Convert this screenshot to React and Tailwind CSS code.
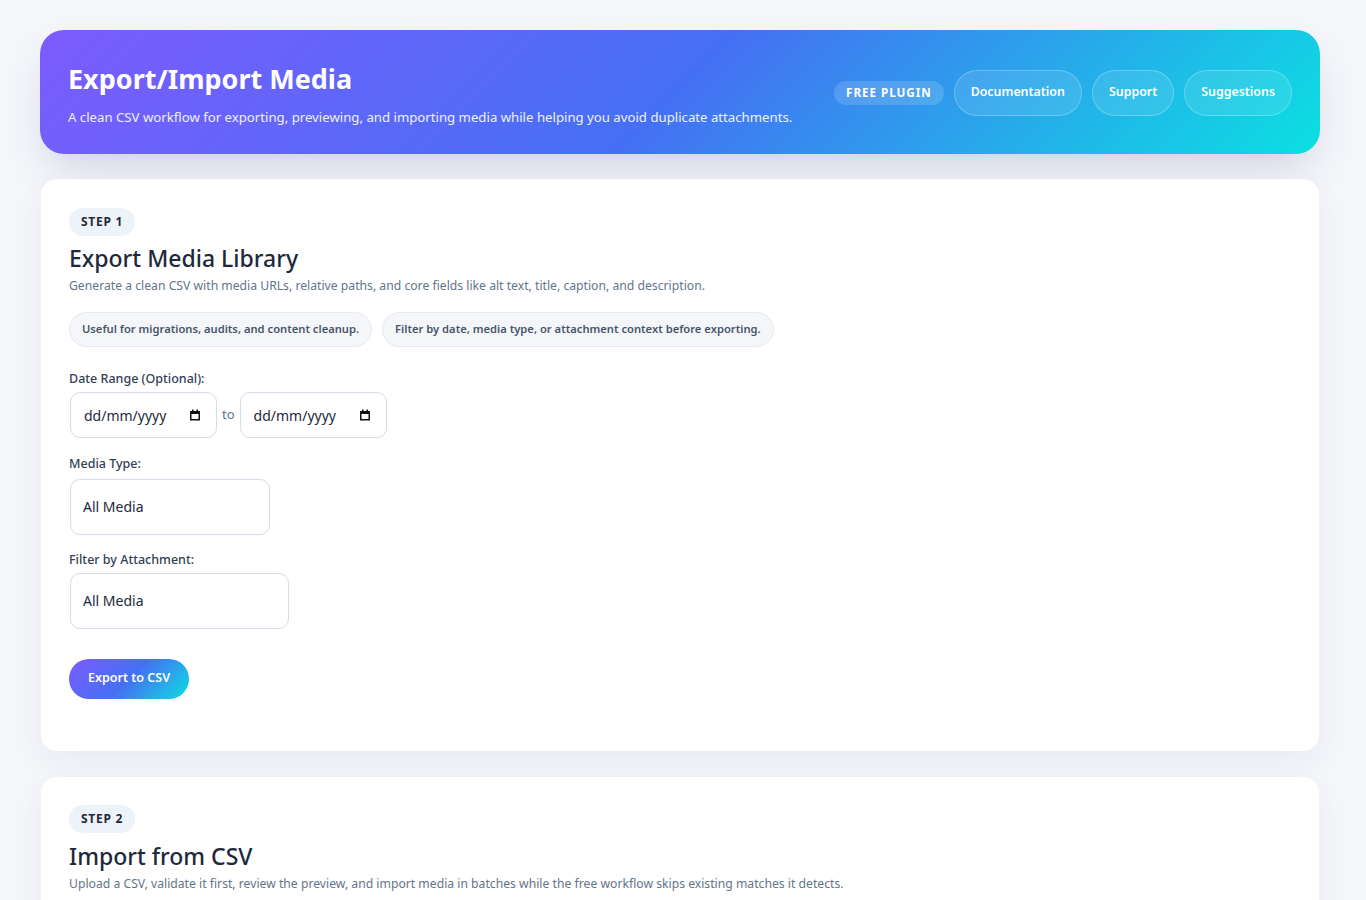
import React from 'react'

// Small calendar glyph like Chrome's date picker indicator
function CalendarIcon() {
  return (
    <svg width="12" height="12" viewBox="0 0 12 12" className="shrink-0">
      <rect x="3" y="0.5" width="1.5" height="2" fill="#111" />
      <rect x="7.5" y="0.5" width="1.5" height="2" fill="#111" />
      <rect x="1" y="2" width="10" height="3" fill="#111" />
      <rect x="1.75" y="2.75" width="8.5" height="8" fill="none" stroke="#111" strokeWidth="1.5" />
    </svg>
  )
}

function DateField() {
  return (
    <div className="flex items-center justify-between w-[147px] h-[46px] pl-[13px] pr-[15px] bg-white border border-[#d6dce8] rounded-[10px] text-[14px] text-[#1e293b]">
      <span>dd/mm/yyyy</span>
      <CalendarIcon />
    </div>
  )
}

function SelectField({ width }) {
  return (
    <select
      className={`appearance-none h-[56px] px-[12px] bg-white border border-[#d6dce8] rounded-[10px] text-[14px] text-[#1e293b] outline-none ${width}`}
      defaultValue="all"
    >
      <option value="all">All Media</option>
      <option value="image">Images</option>
      <option value="video">Video</option>
    </select>
  )
}

function StepBadge({ children }) {
  return (
    <span className="inline-flex items-center h-[28px] px-[12px] rounded-full bg-[#eef2f9] text-[12px] font-bold tracking-[0.06em] text-[#1e293b]">
      {children}
    </span>
  )
}

function Chip({ children }) {
  return (
    <span className="inline-flex items-center h-[35px] px-[12px] rounded-full bg-[#f5f6fa] border border-[#e6e9f0] text-[11.2px] font-semibold text-[#475569]">
      {children}
    </span>
  )
}

function HeaderLink({ children }) {
  return (
    <a className="inline-flex items-center h-[46px] px-[16px] rounded-full border border-white/25 bg-white/10 text-[12.4px] font-semibold text-white">
      {children}
    </a>
  )
}

export default function App() {
  return (
    <div className="min-h-screen bg-[#f5f6fa] pt-[30px] pb-[40px] font-['Noto_Sans',sans-serif]">
      <div className="max-w-[1280px] ml-[40px]">
        {/* Header */}
        <header className="flex items-center justify-between h-[124px] px-[28px] rounded-[24px] bg-[linear-gradient(135deg,#7d5bff_0%,#4570f3_50%,#0be0e2_100%)] shadow-[0_20px_40px_-12px_rgba(70,80,140,0.25)]">
          <div className="pt-[6px]">
            <h1 className="text-[27px] leading-[34px] font-bold text-white">Export/Import Media</h1>
            <p className="mt-[12px] text-[13.2px] text-white/90">
              A clean CSV workflow for exporting, previewing, and importing media while helping you avoid duplicate attachments.
            </p>
          </div>
          <div className="flex items-center gap-[10px] pt-[1px] pl-[2px]">
            <span className="inline-flex items-center h-[24px] px-[12px] rounded-full bg-white/15 text-[11.7px] font-bold tracking-[0.08em] text-white">
              FREE PLUGIN
            </span>
            <HeaderLink>Documentation</HeaderLink>
            <HeaderLink>Support</HeaderLink>
            <HeaderLink>Suggestions</HeaderLink>
          </div>
        </header>

        {/* Step 1 */}
        <section className="mt-[25px] mx-[1px] bg-white rounded-[16px] px-[28px] pt-[29px] pb-[52px] shadow-[0_10px_30px_rgba(60,70,120,0.06)]">
          <StepBadge>STEP 1</StepBadge>
          <h2 className="mt-[6px] text-[23px] leading-[32px] font-medium text-[#1e293b]">Export Media Library</h2>
          <p className="mt-[3px] text-[12.2px] text-[#64748b]">
            Generate a clean CSV with media URLs, relative paths, and core fields like alt text, title, caption, and description.
          </p>
          <div className="mt-[17px] flex gap-[10px]">
            <Chip>Useful for migrations, audits, and content cleanup.</Chip>
            <Chip>Filter by date, media type, or attachment context before exporting.</Chip>
          </div>

          <label className="block mt-[23px] text-[12.5px] font-medium text-[#334155]">Date Range (Optional):</label>
          <div className="mt-[3px] flex items-center gap-[5px] pl-[1px]">
            <DateField />
            <span className="text-[13px] text-[#64748b]">to</span>
            <DateField />
          </div>

          <label className="block mt-[17px] text-[12.5px] font-medium text-[#334155]">Media Type:</label>
          <div className="mt-[5px] pl-[1px]">
            <SelectField width="w-[200px]" />
          </div>

          <label className="block mt-[16px] text-[12.5px] font-medium text-[#334155]">Filter by Attachment:</label>
          <div className="mt-[3px] pl-[1px]">
            <SelectField width="w-[219px]" />
          </div>

          <button className="mt-[30px] h-[40px] px-[19px] rounded-full bg-[linear-gradient(135deg,#7d5bff_0%,#4570f3_50%,#0be0e2_100%)] text-[12.5px] font-semibold text-white">
            Export to CSV
          </button>
        </section>

        {/* Step 2 */}
        <section className="mt-[26px] mx-[1px] bg-white rounded-[16px] px-[28px] pt-[28px] pb-[40px] shadow-[0_10px_30px_rgba(60,70,120,0.06)]">
          <StepBadge>STEP 2</StepBadge>
          <h2 className="mt-[7px] text-[23px] leading-[32px] font-medium text-[#1e293b]">Import from CSV</h2>
          <p className="mt-[3px] text-[12.2px] text-[#64748b]">
            Upload a CSV, validate it first, review the preview, and import media in batches while the free workflow skips existing matches it detects.
          </p>
          <div className="h-[200px]" />
        </section>
      </div>
    </div>
  )
}
